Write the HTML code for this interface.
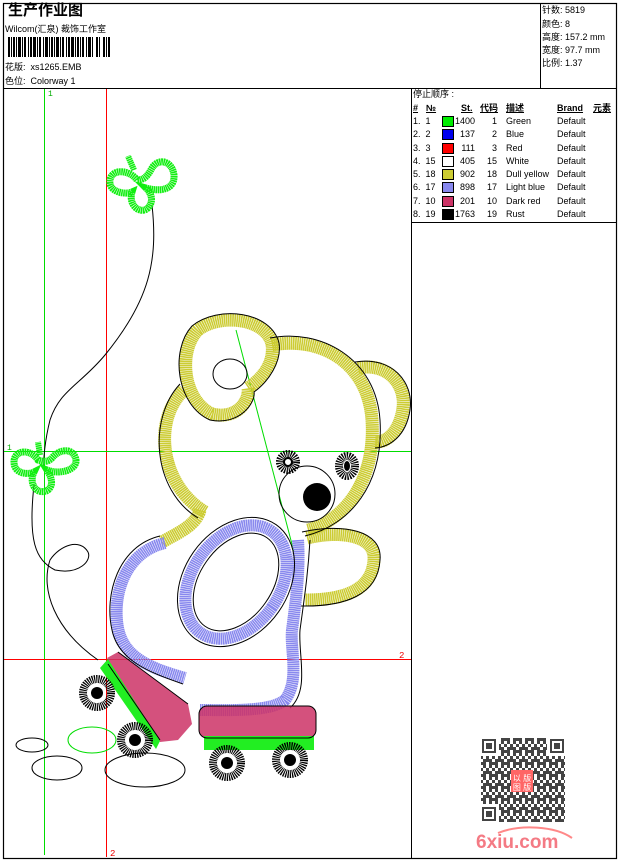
<!DOCTYPE html>
<html><head><meta charset="utf-8"><style>
html,body{margin:0;padding:0;background:#fff;}
body{width:620px;height:860px;position:relative;overflow:hidden;font-family:"Liberation Sans","Noto Sans CJK SC",sans-serif;color:#000;font-size:9px;}
.t{position:absolute;white-space:nowrap;line-height:1;}
.rows{position:absolute;left:413px;top:116px;width:204px;font-size:9px;white-space:nowrap;line-height:11px;}
.rows>div{position:relative;height:13.3px}
.rows span{position:absolute;white-space:nowrap}
.sw{left:29px;top:0px;width:10px;height:9px;border:1px solid #000}
.st{left:32px;width:30px;text-align:right}
.cd{left:66px;width:18px;text-align:right}
.ds{left:93px}.br{left:144px}
</style></head><body>
<svg width="620" height="860" style="position:absolute;left:0;top:0" xmlns="http://www.w3.org/2000/svg">
<defs>
<pattern id="qr" width="12" height="12" patternUnits="userSpaceOnUse">
<rect width="12" height="12" fill="#fff"/>
<rect x="0" y="0" width="3" height="3" fill="#444"/><rect x="6" y="0" width="3" height="6" fill="#444"/><rect x="3" y="3" width="3" height="3" fill="#444"/><rect x="9" y="3" width="3" height="3" fill="#444"/><rect x="0" y="6" width="6" height="3" fill="#444"/><rect x="9" y="6" width="3" height="6" fill="#444"/><rect x="3" y="9" width="3" height="3" fill="#444"/>
</pattern>
</defs>
<rect x="3.5" y="3.5" width="613" height="855" fill="none" stroke="#000" stroke-width="1.2"/>
<line x1="3" y1="88.5" x2="617" y2="88.5" stroke="#000"/>
<line x1="540.5" y1="3" x2="540.5" y2="88" stroke="#000"/>
<line x1="411.5" y1="88" x2="411.5" y2="858" stroke="#000"/>
<line x1="411" y1="222.5" x2="617" y2="222.5" stroke="#000"/>
<g fill="#000">
<rect x="8" y="37" width="2" height="20"/><rect x="11" y="37" width="1" height="20"/><rect x="13" y="37" width="2" height="20"/><rect x="16" y="37" width="1" height="20"/><rect x="18" y="37" width="3" height="20"/><rect x="22" y="37" width="1" height="20"/><rect x="24" y="37" width="2" height="20"/><rect x="28" y="37" width="1" height="20"/><rect x="30" y="37" width="2" height="20"/><rect x="33" y="37" width="3" height="20"/><rect x="37" y="37" width="1" height="20"/><rect x="39" y="37" width="2" height="20"/><rect x="43" y="37" width="1" height="20"/><rect x="45" y="37" width="3" height="20"/><rect x="49" y="37" width="1" height="20"/><rect x="51" y="37" width="2" height="20"/><rect x="54" y="37" width="1" height="20"/><rect x="56" y="37" width="3" height="20"/><rect x="60" y="37" width="1" height="20"/><rect x="62" y="37" width="2" height="20"/><rect x="66" y="37" width="1" height="20"/><rect x="68" y="37" width="2" height="20"/><rect x="71" y="37" width="3" height="20"/><rect x="75" y="37" width="1" height="20"/><rect x="77" y="37" width="2" height="20"/><rect x="80" y="37" width="1" height="20"/><rect x="82" y="37" width="2" height="20"/><rect x="86" y="37" width="1" height="20"/><rect x="88" y="37" width="3" height="20"/><rect x="92" y="37" width="1" height="20"/><rect x="96" y="37" width="2" height="20"/><rect x="99" y="37" width="1" height="20"/><rect x="103" y="37" width="2" height="20"/><rect x="106" y="37" width="1" height="20"/><rect x="108" y="37" width="2" height="20"/>
</g>
<line x1="44.5" y1="89" x2="44.5" y2="855" stroke="#0d0" stroke-width="1"/>
<line x1="106.5" y1="89" x2="106.5" y2="857" stroke="#f00" stroke-width="1"/>
<line x1="4" y1="451.5" x2="411" y2="451.5" stroke="#0d0" stroke-width="1"/>
<line x1="4" y1="659.5" x2="411" y2="659.5" stroke="#f00" stroke-width="1"/>
<text x="48" y="96" font-size="8" fill="#0a0" font-family="Liberation Mono">1</text>
<text x="7" y="450" font-size="8" fill="#0a0" font-family="Liberation Mono">1</text>
<text x="399" y="658" font-size="9" fill="#e00" font-family="Liberation Mono">2</text>
<text x="110" y="856" font-size="9" fill="#e00" font-family="Liberation Mono">2</text>
<g fill="none" stroke="#000" stroke-width="1">
<path d="M152,205 C158,260 150,300 105,355 C80,385 60,390 50,420 C45,440 43,460 44,470"/>
<path d="M34,485 C28,540 35,560 55,570 C80,575 92,560 88,552 C80,538 60,545 50,560 C40,590 55,630 98,660"/>
<ellipse cx="32" cy="745" rx="16" ry="7"/>
<ellipse cx="57" cy="768" rx="25" ry="12"/>
<ellipse cx="145" cy="770" rx="40" ry="17"/>
</g>
<ellipse cx="92" cy="740" rx="24" ry="13" fill="none" stroke="#0d0" stroke-width="1"/>
<g fill="none" stroke="#1e1" stroke-width="7" stroke-dasharray="1.6 0.5">
<path d="M137,180 C130,170 112,168 110,180 C108,192 125,195 132,192 C128,205 140,215 148,208 C155,200 150,192 146,188 C160,192 175,190 174,175 C172,160 158,158 152,168 C148,175 145,180 137,180 Z"/>
<path d="M38,460 C30,448 14,450 14,462 C14,474 28,475 34,472 C28,485 38,496 48,490 C55,484 50,475 47,470 C60,475 77,470 76,460 C74,448 60,448 52,458 C48,462 44,462 38,460 Z"/>
<path d="M134,170 L128,156" stroke-width="6"/>
<path d="M40,455 L38,442" stroke-width="6"/>
</g>
<line x1="236" y1="330" x2="294" y2="552" stroke="#0d0" stroke-width="1"/>
<g fill="none" stroke="#cc3" stroke-width="13" stroke-dasharray="1.6 0.5">
<path d="M205,512 C160,485 152,420 184,390"/>
<path d="M272,345 C320,336 368,362 372,420 C376,480 345,520 308,530"/>
<path d="M272,344 C266,318 220,313 198,330 C178,350 182,400 212,414 C238,420 250,400 248,388 C260,380 275,365 272,344 Z"/>
<path d="M358,368 C388,362 406,385 403,408 C400,430 388,443 375,442"/>
<path d="M307,538 C340,530 376,535 374,560 C372,590 345,600 305,600"/>
<path d="M200,510 C196,525 180,532 162,542"/>
</g>
<g fill="none" stroke="#000" stroke-width="1">
<path d="M198,518 C152,490 148,418 180,384"/>
<path d="M270,338 C320,328 376,358 380,420 C384,485 350,525 305,536"/>
<path d="M279,343 C271,311 218,305 192,326 C170,350 176,405 210,420 C240,426 256,402 254,392 C268,382 282,362 279,343 Z"/>
<path d="M355,362 C392,356 414,382 410,410 C406,436 390,447 375,448"/>
<path d="M302,532 C342,523 383,530 380,560 C378,595 345,607 300,606"/>
<ellipse cx="230" cy="374" rx="17" ry="15"/>
<circle cx="307" cy="494" r="28"/>
</g>
<g fill="none" stroke="#88e" stroke-width="12" stroke-dasharray="1.6 0.5">
<path d="M165,543 C125,552 112,595 118,628 C124,658 150,668 185,678"/>
<ellipse cx="236" cy="582" rx="44" ry="62" transform="rotate(35 236 582)"/>
<path d="M298,540 C300,570 296,600 292,630 C290,650 300,680 285,700 C270,712 230,710 200,710"/>
</g>
<g fill="none" stroke="#000" stroke-width="1">
<path d="M160,536 C118,546 104,595 112,630 C118,660 148,672 183,684"/>
<path d="M310,540 C308,575 304,600 300,630 C298,655 310,690 290,708"/>
<ellipse cx="236" cy="582" rx="52" ry="70" transform="rotate(35 236 582)"/>
<ellipse cx="236" cy="582" rx="36" ry="54" transform="rotate(35 236 582)"/>
</g>
<polygon points="107,658 118,652 188,704 192,724 178,740 160,742" fill="#c36" opacity="0.85"/>
<polygon points="100,668 108,659 160,741 156,749" fill="#2e2"/>
<path d="M108,664 L160,740 M118,652 L188,704" stroke="#000" stroke-width="1" fill="none"/>
<rect x="199" y="706" width="117" height="32" rx="8" fill="#c36" opacity="0.85"/>
<rect x="204" y="736" width="110" height="14" fill="#2e2"/>
<rect x="199" y="706" width="117" height="32" rx="8" fill="none" stroke="#000" stroke-width="1"/>
<g fill="none" stroke="#000" stroke-width="8" stroke-dasharray="1.2 0.9">
<circle cx="97" cy="693" r="14"/>
<circle cx="135" cy="740" r="14"/>
<circle cx="227" cy="763" r="14"/>
<circle cx="290" cy="760" r="14"/>
<circle cx="288" cy="462" r="8"/>
<ellipse cx="347" cy="466" rx="8" ry="10"/>
</g>
<g fill="#000">
<circle cx="97" cy="693" r="6"/><circle cx="135" cy="740" r="6"/><circle cx="227" cy="763" r="6"/><circle cx="290" cy="760" r="6"/>
<circle cx="288" cy="462" r="4" fill="none" stroke="#000" stroke-width="2"/>
<ellipse cx="347" cy="466" rx="3" ry="5"/>
<circle cx="317" cy="497" r="14"/>
</g>
<rect x="481" y="738" width="84" height="84" fill="url(#qr)"/>
<g fill="#fff">
<rect x="481" y="738" width="18" height="18"/><rect x="547" y="738" width="18" height="18"/><rect x="481" y="804" width="18" height="18"/>
</g>
<g fill="#444">
<rect x="482" y="739" width="14" height="14"/><rect x="550" y="739" width="14" height="14"/><rect x="482" y="807" width="14" height="14"/>
</g>
<g fill="#fff"><rect x="484" y="741" width="10" height="10"/><rect x="552" y="741" width="10" height="10"/><rect x="484" y="809" width="10" height="10"/></g>
<g fill="#444"><rect x="486" y="743" width="6" height="6"/><rect x="554" y="743" width="6" height="6"/><rect x="486" y="811" width="6" height="6"/></g>
<rect x="511" y="770" width="22" height="22" fill="#f66"/>
<text x="522" y="781" font-size="8" fill="#fff" text-anchor="middle">以 版</text>
<text x="522" y="790" font-size="8" fill="#fff" text-anchor="middle">图 版</text>
<path d="M498,833 C520,824 555,826 572,838" stroke="#f88" stroke-width="2" fill="none"/>
<text x="476" y="848" font-size="19" font-weight="bold" fill="#f47a84" font-family="Liberation Sans">6xiu.com</text>
</svg>
<div class="t" style="left:8px;top:3px;font-size:15px;font-weight:bold;">生产作业图</div>
<div class="t" style="left:5px;top:25px;">Wilcom(汇泉) 裁饰工作室</div>
<div class="t" style="left:5px;top:63px;">花版:&nbsp; xs1265.EMB</div>
<div class="t" style="left:5px;top:77px;">色位:&nbsp; Colorway 1</div>
<div class="t" style="left:542px;top:6px;">针数: 5819</div>
<div class="t" style="left:542px;top:20px;">颜色: 8</div>
<div class="t" style="left:542px;top:33px;">高度: 157.2 mm</div>
<div class="t" style="left:542px;top:46px;">宽度: 97.7 mm</div>
<div class="t" style="left:542px;top:59px;">比例: 1.37</div>
<div class="t" style="left:413px;top:90px;">停止顺序 :</div>
<div class="rows" style="top:103px;font-weight:bold;">
<div><span style="left:0;text-decoration:underline">#</span><span style="left:13px;text-decoration:underline">№</span><span style="left:48px;text-decoration:underline">St.</span><span style="left:67px;text-decoration:underline">代码</span><span style="left:93px;text-decoration:underline">描述</span><span style="left:144px;text-decoration:underline">Brand</span><span style="left:180px;text-decoration:underline">元素</span></div>
</div>
<div class="rows">
<div><span style="left:0">1.&nbsp; 1</span><span class="sw" style="background:#0e0"></span><span class="st">1400</span><span class="cd">1</span><span class="ds">Green</span><span class="br">Default</span></div>
<div><span style="left:0">2.&nbsp; 2</span><span class="sw" style="background:#00e"></span><span class="st">137</span><span class="cd">2</span><span class="ds">Blue</span><span class="br">Default</span></div>
<div><span style="left:0">3.&nbsp; 3</span><span class="sw" style="background:#f00"></span><span class="st">111</span><span class="cd">3</span><span class="ds">Red</span><span class="br">Default</span></div>
<div><span style="left:0">4.&nbsp; 15</span><span class="sw" style="background:#fff"></span><span class="st">405</span><span class="cd">15</span><span class="ds">White</span><span class="br">Default</span></div>
<div><span style="left:0">5.&nbsp; 18</span><span class="sw" style="background:#cc3"></span><span class="st">902</span><span class="cd">18</span><span class="ds">Dull yellow</span><span class="br">Default</span></div>
<div><span style="left:0">6.&nbsp; 17</span><span class="sw" style="background:#88e"></span><span class="st">898</span><span class="cd">17</span><span class="ds">Light blue</span><span class="br">Default</span></div>
<div><span style="left:0">7.&nbsp; 10</span><span class="sw" style="background:#c36"></span><span class="st">201</span><span class="cd">10</span><span class="ds">Dark red</span><span class="br">Default</span></div>
<div><span style="left:0">8.&nbsp; 19</span><span class="sw" style="background:#000"></span><span class="st">1763</span><span class="cd">19</span><span class="ds">Rust</span><span class="br">Default</span></div>
</div>
</body></html>
